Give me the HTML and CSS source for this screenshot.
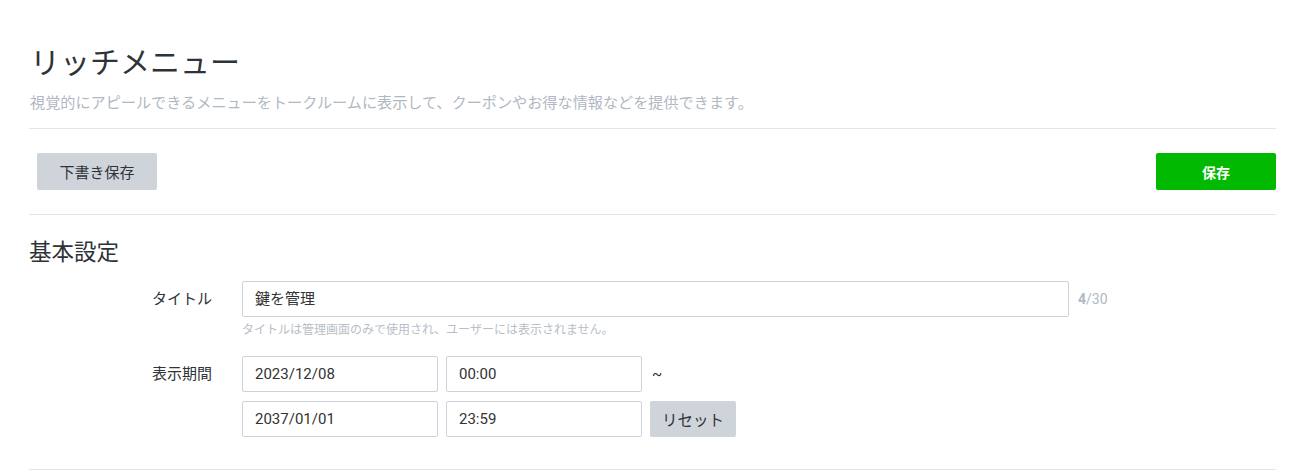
FILE: index.html
```html
<!DOCTYPE html>
<html lang="ja">
<head>
<meta charset="utf-8">
<title>リッチメニュー</title>
<link rel="stylesheet" href="styles.css">
</head>
<body>
<div class="page">
  <header class="head">
    <h1 class="title">リッチメニュー</h1>
    <p class="subtitle">視覚的にアピールできるメニューをトークルームに表示して、クーポンやお得な情報などを提供できます。</p>
  </header>
  <div class="toolbar">
    <button class="btn btn-gray btn-draft">下書き保存</button>
    <button class="btn btn-green">保存</button>
  </div>
  <section class="section">
    <h2 class="section-title">基本設定</h2>
    <div class="form">
      <div class="row">
        <div class="label">タイトル</div>
        <div class="field">
          <div class="line">
            <div class="input input-title">鍵を管理</div>
            <div class="count"><b>4</b>/30</div>
          </div>
          <div class="hint">タイトルは管理画面のみで使用され、ユーザーには表示されません。</div>
        </div>
      </div>
      <div class="row row-period">
        <div class="label">表示期間</div>
        <div class="field">
          <div class="line">
            <div class="input input-short">2023/12/08</div>
            <div class="input input-short">00:00</div>
            <div class="tilde">~</div>
          </div>
          <div class="line line-second">
            <div class="input input-short">2037/01/01</div>
            <div class="input input-short">23:59</div>
            <button class="btn btn-gray btn-reset">リセット</button>
          </div>
        </div>
      </div>
    </div>
  </section>
</div>
</body>
</html>
```

FILE: styles.css
```css
* { box-sizing: border-box; }
html, body { margin: 0; padding: 0; background: #fff; }
body {
  font-family: Roboto, "Noto Sans CJK JP", sans-serif;
  color: #333;
}
.page {
  width: 1276px;
  padding: 0 0 0 29px;
}
.head {
  padding-top: 43px;
  padding-bottom: 15px;
  border-bottom: 1px solid #e5e5e5;
}
.title {
  margin: 0;
  font-size: 30px;
  line-height: 40px;
  font-weight: 400;
  color: #2f3338;
  padding-left: 1px;
}
.subtitle {
  margin: 10px 0 0;
  font-size: 15.15px;
  line-height: 20px;
  color: #b0b8c3;
  padding-left: 1px;
}
.toolbar {
  display: flex;
  justify-content: space-between;
  align-items: center;
  padding: 24px 0 24px 8px;
  border-bottom: 1px solid #e5e5e5;
}
.btn {
  border: none;
  border-radius: 2px;
  font-family: Roboto, "Noto Sans CJK JP", sans-serif;
  font-size: 14px;
  height: 37px;
  width: 120px;
  padding: 0;
  cursor: pointer;
}
.btn-gray { background: #cfd4db; color: #2f3338; }
.btn-draft { font-size: 15px; }
.btn-green { background: #00b900; color: #fff; font-weight: 700; }
.section {
  padding-top: 21px;
  padding-bottom: 32px;
  border-bottom: 1px solid #e5e5e5;
}
.section-title {
  margin: 0;
  font-size: 22.5px;
  line-height: 32px;
  font-weight: 400;
  color: #2f3338;
}
.form {
  padding-left: 123px;
  padding-top: 13px;
}
.row { display: flex; }
.row-period { margin-top: 17px; }
.label {
  width: 90px;
  font-size: 15px;
  line-height: 36px;
  color: #2f3338;
}
.field { display: flex; flex-direction: column; }
.line { display: flex; align-items: center; gap: 8px; }
.line-second { margin-top: 9px; }
.input {
  height: 36px;
  border: 1px solid #cdd3db;
  border-radius: 2px;
  padding: 0 12px;
  font-size: 15px;
  line-height: 34px;
  color: #333;
}
.input-title { width: 827px; }
.input-short { width: 196px; }
.count {
  margin-left: 1px;
  font-size: 14px;
  color: #b0b8c3;
}
.count b { font-weight: 700; }
.hint {
  margin-top: 4px;
  font-size: 12px;
  line-height: 18px;
  color: #b7bec8;
}
.tilde { margin-left: 2px; font-size: 15px; color: #333; }
.btn-reset {
  width: 86px;
  height: 36px;
  font-size: 15.5px;
}
```
